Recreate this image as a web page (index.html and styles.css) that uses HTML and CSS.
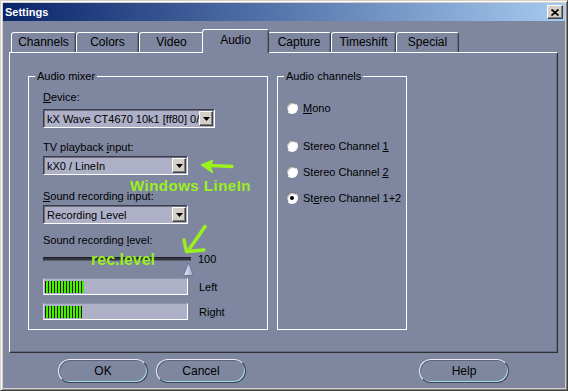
FILE: index.html
```html
<!DOCTYPE html>
<html lang="en">
<head>
    <meta charset="UTF-8">
    <title>Settings</title>
    <link rel="stylesheet" href="styles.css">
</head>
<body>
    <div class="window">
        <div class="titlebar">
            <span class="title">Settings</span>
            <span class="close-btn">
                <svg width="8" height="7" viewBox="0 0 8 7"><path d="M0.5 0.5 L7.5 6.5 M7.5 0.5 L0.5 6.5" stroke="#000" stroke-width="1.7"/></svg>
            </span>
        </div>

        <div class="dialog">
            <div class="tabs">
                <div class="tab tab-channels">Channels</div>
                <div class="tab tab-colors">Colors</div>
                <div class="tab tab-video">Video</div>
                <div class="tab tab-audio active">Audio</div>
                <div class="tab tab-capture">Capture</div>
                <div class="tab tab-timeshift">Timeshift</div>
                <div class="tab tab-special">Special</div>
            </div>

            <div class="panel">
                <fieldset class="group mixer">
                    <legend>Audio mixer</legend>
                    <div class="mixer-body">
                        <div class="field-label"><u>D</u>evice:</div>
                        <div class="combo combo-device">
                            <span class="combo-text">kX Wave CT4670 10k1 [ff80] 0/</span>
                            <span class="combo-btn"><svg width="7" height="4" viewBox="0 0 7 4"><path d="M0 0 H7 L3.5 4 Z" fill="#000"/></svg></span>
                        </div>

                        <div class="field-label label-playback">TV playback <u>i</u>nput:</div>
                        <div class="combo combo-short">
                            <span class="combo-text">kX0 / LineIn</span>
                            <span class="combo-btn"><svg width="7" height="4" viewBox="0 0 7 4"><path d="M0 0 H7 L3.5 4 Z" fill="#000"/></svg></span>
                        </div>

                        <div class="field-label label-rec-input"><u>S</u>ound recording input:</div>
                        <div class="combo combo-short">
                            <span class="combo-text">Recording Level</span>
                            <span class="combo-btn"><svg width="7" height="4" viewBox="0 0 7 4"><path d="M0 0 H7 L3.5 4 Z" fill="#000"/></svg></span>
                        </div>

                        <div class="field-label label-rec-level">Sound recording <u>l</u>evel:</div>
                        <div class="slider-row">
                            <div class="slider-track">
                                <svg class="slider-thumb" width="11" height="14" viewBox="0 0 11 14">
                                    <defs>
                                        <linearGradient id="thumb" x1="0" y1="0" x2="1" y2="0">
                                            <stop offset="0" stop-color="#e8ecfa"/>
                                            <stop offset="1" stop-color="#9aa4c8"/>
                                        </linearGradient>
                                    </defs>
                                    <path d="M5.5 0.5 L10.5 13.5 L0.5 13.5 Z" fill="url(#thumb)" stroke="#6c7492"/>
                                </svg>
                            </div>
                            <span class="slider-value">100</span>
                        </div>

                        <div class="meter-row">
                            <div class="meter"><div class="meter-fill" style="width: 39px"></div></div>
                            <span class="meter-label">Left</span>
                        </div>
                        <div class="meter-row meter-right">
                            <div class="meter"><div class="meter-fill" style="width: 37px"></div></div>
                            <span class="meter-label">Right</span>
                        </div>
                    </div>
                </fieldset>

                <fieldset class="group channels">
                    <legend>Audio channels</legend>
                    <div class="channels-body">
                        <div class="radio-row"><span class="radio"></span><span><u>M</u>ono</span></div>
                        <div class="radio-row stereo-first"><span class="radio"></span><span>Stereo Channel <u>1</u></span></div>
                        <div class="radio-row"><span class="radio"></span><span>Stereo Channel <u>2</u></span></div>
                        <div class="radio-row"><span class="radio checked"></span><span>St<u>e</u>reo Channel 1+2</span></div>
                    </div>
                </fieldset>

                <!-- hand drawn notes on top of the screenshot -->
                <svg class="notes" width="547" height="299" viewBox="0 0 547 299">
                    <g fill="none" stroke="#9cf01e" stroke-width="3.5" stroke-linecap="round" stroke-linejoin="round">
                        <path d="M201 112.5 L222 113.5"/>
                        <path d="M195 173.5 Q188 184 180 195"/>
                        <path d="M174 187 L176.5 198.5 L194 197"/>
                    </g>
                    <path d="M191.5 112 L202.5 107.5 L200 113 L202.5 119.5 Z" fill="#9cf01e" stroke="#9cf01e" stroke-width="1.5" stroke-linejoin="round"/>
                </svg>
                <span class="note note-linein">Windows LineIn</span>
                <span class="note note-level">rec.level</span>
            </div>

            <div class="buttons">
                <div class="btn">OK</div>
                <div class="btn btn-cancel">Cancel</div>
                <div class="btn btn-help">Help</div>
            </div>
        </div>
    </div>
</body>
</html>
```

FILE: styles.css
```css
:root {
    --face: #7e879f;
    --field: #aeb0c8;
    --frame: #d4d0c8;
    --dark: #404040;
    --note: #9cf01e;
}

body {
    margin: 0;
    font-family: "Liberation Sans", Arial, sans-serif;
    font-size: 11px;
    color: #000;
}

.window {
    width: 568px;
    height: 391px;
    box-sizing: border-box;
    border: 1px solid;
    border-color: var(--frame) var(--dark) var(--dark) var(--frame);
    box-shadow: inset 1px 1px 0 #fff, inset -1px -1px 0 #808080;
    padding: 2px;
    background: var(--frame);
    display: flex;
    flex-direction: column;
}

.titlebar {
    height: 18px;
    flex: none;
    display: flex;
    align-items: center;
    justify-content: space-between;
    padding: 0 2px;
    background: linear-gradient(90deg, #0a246a, #a6caf0);
}

.title {
    color: #fff;
    font-weight: bold;
    font-size: 11px;
}

.close-btn {
    width: 16px;
    height: 14px;
    box-sizing: border-box;
    display: flex;
    align-items: center;
    justify-content: center;
    background: var(--frame);
    border: 1px solid;
    border-color: #fff var(--dark) var(--dark) #fff;
    box-shadow: inset -1px -1px 0 #808080;
}

.dialog {
    flex: 1;
    background: var(--face);
    padding: 8px 7px 0 6px;
    display: flex;
    flex-direction: column;
}

/* tabs */

.tabs {
    height: 23px;
    display: flex;
    align-items: flex-end;
    padding-left: 2px;
}

.tab {
    height: 20px;
    box-sizing: border-box;
    border: 1px solid;
    border-bottom: none;
    border-color: #fff var(--dark) transparent #fff;
    border-radius: 3px 3px 0 0;
    box-shadow: inset -1px 0 0 #666d84;
    background: var(--face);
    font-size: 12px;
    line-height: 19px;
    text-align: center;
}

.tab-channels { width: 65px; }
.tab-colors { width: 63px; }
.tab-video { width: 65px; }
.tab-audio { width: 63px; }
.tab-capture { width: 64px; }
.tab-timeshift { width: 65px; }
.tab-special { width: 63px; }

.tab.active {
    width: 67px;
    height: 24px;
    margin: 0 -2px -1px;
    line-height: 20px;
    position: relative;
    z-index: 1;
}

.panel {
    position: relative;
    height: 301px;
    box-sizing: border-box;
    border: 1px solid;
    border-color: #fff #303030 #303030 #fff;
    box-shadow: inset -1px -1px 0 #666d84;
    padding: 17px 0 0 18px;
    display: flex;
    gap: 9px;
}

/* group boxes */

.group {
    margin: 0;
    padding: 0;
    min-width: 0;
    height: 260px;
    box-sizing: border-box;
    border: 1px solid #fff;
}

.group legend {
    margin-left: 6px;
    padding: 0 2px;
    line-height: 13px;
}

.mixer {
    width: 240px;
}

.channels {
    width: 130px;
}

.mixer-body {
    padding: 8px 0 0 14px;
}

.field-label {
    line-height: 13px;
    white-space: nowrap;
}

.label-playback { margin-top: 13px; }
.label-rec-input { margin-top: 15px; }
.label-rec-level { margin-top: 10px; }

.combo {
    height: 19px;
    width: 145px;
    box-sizing: border-box;
    margin-top: 2px;
    display: flex;
    align-items: center;
    background: var(--field);
    border: 1px solid;
    border-color: #3a3d48 #fff #fff #3a3d48;
    box-shadow: inset 1px 1px 0 #6a6f84;
}

.combo-device {
    width: 172px;
    margin-top: 5px;
}

.combo-text {
    flex: 1;
    min-width: 0;
    padding-left: 3px;
    overflow: hidden;
    white-space: nowrap;
    font-size: 11px;
}

.combo-btn {
    width: 14px;
    height: 15px;
    box-sizing: border-box;
    margin-right: 1px;
    display: flex;
    align-items: center;
    justify-content: center;
    background: var(--frame);
    border: 1px solid;
    border-color: #fff var(--dark) var(--dark) #fff;
    box-shadow: inset -1px -1px 0 #808080;
}

/* slider and meters */

.slider-row {
    margin-top: 4px;
    height: 16px;
    display: flex;
    align-items: center;
}

.slider-track {
    position: relative;
    width: 148px;
    height: 4px;
    box-sizing: border-box;
    background: #34363f;
    border-top: 1px solid #1e1f26;
    border-bottom: 1px solid #5a5f72;
}

.slider-thumb {
    position: absolute;
    left: 140px;
    top: 4px;
}

.slider-value {
    margin-left: 7px;
}

.meter-row {
    margin-top: 11px;
    display: flex;
    align-items: center;
}

.meter-right {
    margin-top: 8px;
}

.meter {
    width: 145px;
    height: 17px;
    box-sizing: border-box;
    padding: 2px 1px 1px;
    background: var(--field);
    border: 1px solid;
    border-color: #8d92a8 #fff #fff #d8dae6;
}

.meter-fill {
    height: 12px;
    background: repeating-linear-gradient(90deg, #111a00 0 1px, #44f000 1px 3px);
}

.meter-label {
    margin-left: 11px;
}

/* radios */

.channels-body {
    padding: 18px 0 0 8px;
}

.radio-row {
    height: 14px;
    display: flex;
    align-items: center;
    gap: 5px;
    margin-top: 12px;
    white-space: nowrap;
}

.radio-row:first-child {
    margin-top: 0;
}

.radio-row.stereo-first {
    margin-top: 24px;
}

.radio {
    width: 12px;
    height: 12px;
    box-sizing: border-box;
    border-radius: 50%;
    border: 1px solid;
    border-color: #7a7a7a #f4f4f4 #f4f4f4 #7a7a7a;
    background: #fff;
    box-shadow: inset 1px 1px 0 #b8b8c0;
    display: flex;
    align-items: center;
    justify-content: center;
}

.radio.checked::after {
    content: "";
    width: 4px;
    height: 4px;
    border-radius: 50%;
    background: #000;
}

/* annotations drawn over the dialog */

.notes {
    position: absolute;
    left: 0;
    top: 0;
    pointer-events: none;
}

.note {
    position: absolute;
    color: var(--note);
    font-weight: bold;
    white-space: nowrap;
}

.note-linein {
    left: 120px;
    top: 125px;
    font-size: 15px;
    line-height: 15px;
    letter-spacing: 0.5px;
}

.note-level {
    left: 81px;
    top: 199px;
    font-size: 16px;
    line-height: 16px;
}

/* bottom buttons */

.buttons {
    margin-top: 6px;
    display: flex;
    padding: 0 49px;
}

.btn {
    width: 90px;
    height: 24px;
    box-sizing: border-box;
    border-radius: 12px;
    border: 1px solid;
    border-color: #eef0f6 #3c4152 #3c4152 #eef0f6;
    box-shadow: inset 1px 1px 0 #5c647a, inset -1px -1px 0 #a6dcec;
    font-size: 12px;
    line-height: 22px;
    text-align: center;
}

.btn-cancel {
    margin-left: 8px;
}

.btn-help {
    margin-left: auto;
}
```
